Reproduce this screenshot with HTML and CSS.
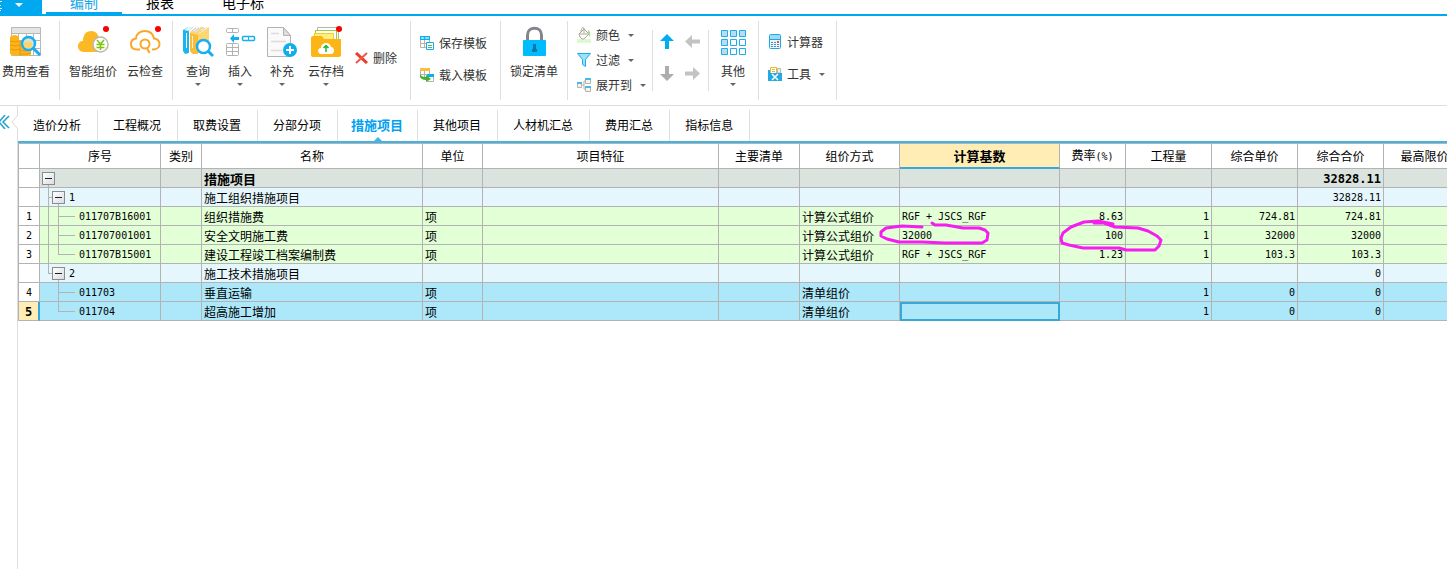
FILE: index.html
```html
<!DOCTYPE html>
<html lang="zh-CN">
<head>
    <meta charset="utf-8">
    <meta name="viewport" content="width=device-width, initial-scale=1.0">
    <title>措施项目</title>
    <link rel="stylesheet" href="styles.css">
</head>
<body>
    <!-- 顶部菜单 -->
    <header class="menu-bar">
        <button class="menu-app" aria-label="菜单">
            <svg width="24" height="12" viewBox="0 0 24 12" fill="none">
                <path d="M0 1.500H2M0 5.500H1M0 8.500H2M0 10.500H1" stroke="#fff" />
                <path d="M15 3H23L19 7Z" fill="#fff" />
            </svg>
        </button>
        <nav class="menu-tabs">
            <a class="active" href="#">编制</a>
            <a href="#">报表</a>
            <a href="#">电子标</a>
        </nav>
    </header>

    <!-- 工具栏 -->
    <div class="ribbon">
        <div class="group group-view">
            <button class="tool">
                <svg width="32" height="32" viewBox="0 0 32 32" fill="none">
                    <path d="M1.500 1.500H30.500V29.500H1.500Z" fill="#fff" stroke="#b8b8b8" />
                    <path d="M2 2H30V7H2Z" fill="#e4e4e4" />
                    <path d="M1 7.500H30M1 14.500H30M1 22.500H30M8.500 7V29M16.500 7V29M23.500 7V29" stroke="#b8b8b8" />
                    <path d="M0 11Q5 7 9 11V15Q15 12 21 16V29Q16 31 12 29Q5 31 0 28Z" fill="#fdb515" />
                    <path d="M0 15Q5 17 9 15M0 19Q5 21 10 19M0 23Q5 25 10 23M10 15V30M10 24Q15 26 21 24M10 28Q15 29 21 27" stroke="#e8951c" />
                    <circle cx="18.500" cy="17.500" r="6.500" fill="#d9e3d2" stroke="#19aef0" stroke-width="2.500" />
                    <path d="M14 17Q18 14 22 17V21Q18 23 14 21Z" fill="#ffd36b" />
                    <path d="M23.500 22.500L30 29" stroke="#19aef0" stroke-width="3" />
                </svg>
                <span>费用查看</span>
            </button>
        </div>
        <i class="sep"></i>

        <div class="group group-cloud">
            <button class="tool">
                <svg width="32" height="32" viewBox="0 0 32 32" fill="none">
                    <path d="M7 26C3 26 1 23 1 20.500C1 17 3 15 6 15C6 9 9 5 14 5C19 5 21 8 22 12L26 15V26Z" fill="#fdb924" />
                    <circle cx="23.500" cy="18.500" r="7.500" fill="#fff" stroke="#bdb8ae" stroke-width="1.500" />
                    <path d="M20 14L23.500 18L27 14M19.500 18.500H27.500M19.500 21.500H27.500M23.500 18V24" stroke="#7ac70c" stroke-width="1.500" />
                    <circle cx="29" cy="3" r="3" fill="#fa0000" />
                </svg>
                <span>智能组价</span>
            </button>
            <button class="tool">
                <svg width="32" height="32" viewBox="0 0 32 32" fill="none">
                    <path d="M11 23.500H8C4 23.500 2 21 2 18C2 15 4 13 7 12.500C7 8 11 5 16 5C21 5 24 8 25 12.500C28 13 30.500 15 30.500 18C30.500 21 28 23.500 24 23.500H23" stroke="#fba628" stroke-width="2" />
                    <circle cx="16" cy="18" r="4.500" stroke="#fba628" stroke-width="2" />
                    <path d="M18 22L20.500 27" stroke="#fba628" stroke-width="2" />
                    <circle cx="29" cy="3" r="3" fill="#fa0000" />
                </svg>
                <span>云检查</span>
            </button>
        </div>
        <i class="sep"></i>

        <div class="group group-edit">
            <button class="tool">
                <svg width="32" height="32" viewBox="0 0 32 32" fill="none">
                    <path d="M1 4L6 1H11L7 5V27L3 28L1 25Z" fill="#19b5ee" />
                    <path d="M2 4L6 1H11L7 5Z" fill="#e9f4f8" />
                    <path d="M4.500 7V22" stroke="#fff" />
                    <path d="M8 6L14 1H27V22L16 27L11 28L8 25Z" fill="#fdd66d" />
                    <path d="M9 5L14 1H19L14 6ZM18 5L22 1H27L17 8Z" fill="#f3f3f3" />
                    <path d="M10 5L14 2M12 6L17 2M18 6L23 2" stroke="#c9c9c9" />
                    <path d="M8 7V25L11 28H16V9Z" fill="#f9bd3c" />
                    <path d="M10.500 10V22" stroke="#fff1c9" />
                    <circle cx="21.500" cy="20.500" r="6.500" fill="#fff" stroke="#19aef0" stroke-width="2.500" />
                    <path d="M26 25L31 30" stroke="#19aef0" stroke-width="3" />
                </svg>
                <span>查询</span>
                <i class="caret"></i>
            </button>
            <button class="tool">
                <svg width="32" height="32" viewBox="0 0 32 32" fill="none">
                    <rect x="2.500" y="2.500" width="12" height="4" rx="1" stroke="#b3b3b3" />
                    <path d="M8.500 2V7" stroke="#b3b3b3" />
                    <path d="M6 12.500L10 8V11H15V14H10V17Z" fill="#19aef0" />
                    <rect x="18.500" y="10.500" width="12" height="4" rx="1" stroke="#19aef0" stroke-width="1.500" />
                    <path d="M24.500 10V15" stroke="#19aef0" />
                    <rect x="2.500" y="17.500" width="12" height="12" rx="1" stroke="#b3b3b3" />
                    <path d="M2 21.500H15M2 25.500H15M8.500 17V30" stroke="#b3b3b3" />
                </svg>
                <span>插入</span>
                <i class="caret"></i>
            </button>
            <button class="tool">
                <svg width="32" height="32" viewBox="0 0 32 32" fill="none">
                    <path d="M1.500 1.500H17.500L24.500 9.500V30.500H1.500Z" fill="#fafafa" stroke="#b3b3b3" />
                    <path d="M17.500 1.500V9.500H24.500Z" fill="#dedede" stroke="#b3b3b3" />
                    <path d="M5 7.500H13M5 15.500H20M5 24.500H16" stroke="#dcdcdc" stroke-width="1.500" />
                    <circle cx="24" cy="24" r="7" fill="#10aeef" />
                    <path d="M24 20V28M20 24H28" stroke="#fff" stroke-width="2" />
                </svg>
                <span>补充</span>
                <i class="caret"></i>
            </button>
            <button class="tool tool-wide">
                <svg width="32" height="32" viewBox="0 0 32 32" fill="none">
                    <path d="M7.500 1.500H28.500V20H7.500Z" fill="#fff" stroke="#b3b3a6" />
                    <path d="M5.500 4.500H26.500V20H5.500Z" fill="#fff" stroke="#9ccb3b" />
                    <path d="M4.500 7.500H23.500V20H4.500Z" fill="#ffef83" stroke="#f2cf1c" />
                    <path d="M1 12Q1 10 3 10H12L14 13H31V29Q31 31 29 31H3Q1 31 1 29Z" fill="#fdb515" />
                    <path d="M11 28C7 28 7 22 11 22C11 16 20 15 21 21C25 21 25 28 21 28Z" fill="#fff" />
                    <path d="M16 26V20M13.500 22L16 19.500L18.500 22" stroke="#28b428" stroke-width="1.500" />
                    <circle cx="29" cy="3" r="3" fill="#fa0000" />
                </svg>
                <span>云存档</span>
                <i class="caret"></i>
            </button>
            <button class="row-tool delete">
                <svg width="13" height="12" viewBox="0 0 13 12" fill="none">
                    <path d="M1 1L12 11" stroke="#ee3a2c" stroke-width="3" />
                    <path d="M12 1L1 11" stroke="#f2564a" stroke-width="2" />
                </svg>
                <span>删除</span>
            </button>
        </div>
        <i class="sep"></i>

        <div class="group group-template">
            <button class="row-tool">
                <svg width="14" height="14" viewBox="0 0 14 14" fill="none">
                    <path d="M0.500 0.500H9.500V11.500H0.500Z" fill="#fff" stroke="#b9b2a8" />
                    <path d="M0 0H10V4H0Z" fill="#10aeef" />
                    <path d="M1 1H4V3H1ZM5 1H9V3H5Z" fill="#8fdcf8" />
                    <path d="M4.500 4V12M0 7.500H10" stroke="#b9b2a8" />
                    <path d="M6.500 6.500H13.500V13.500H6.500Z" fill="#fff" stroke="#10aeef" />
                    <path d="M8 9.500H12M8 11.500H12" stroke="#49b86f" />
                </svg>
                <span>保存模板</span>
            </button>
            <button class="row-tool">
                <svg width="14" height="14" viewBox="0 0 14 14" fill="none">
                    <path d="M0.500 0.500H9.500V9.500H0.500Z" fill="#fff" stroke="#b9b2a8" />
                    <path d="M0 0H10V3H0Z" fill="#fdbd3d" />
                    <path d="M4.500 3V10M0 6.500H10" stroke="#b9b2a8" />
                    <path d="M7.500 6.500H13.500V13.500H7.500Z" fill="#fff" stroke="#b9b2a8" />
                    <path d="M7 6H14V9H7Z" fill="#10aeef" />
                    <path d="M0 5C0 8 3 9 6 9V7L11 11L6 14V12C1 12 -1 9 0 5Z" fill="#42b12d" />
                </svg>
                <span>载入模板</span>
            </button>
        </div>
        <i class="sep"></i>

        <div class="group group-lock">
            <button class="tool">
                <svg width="32" height="32" viewBox="0 0 32 32" fill="none">
                    <path d="M9.500 14V9C9.500 0 23.500 0 23.500 9V14" stroke="#84848a" stroke-width="3" />
                    <rect x="5" y="14" width="23" height="16" rx="1" fill="#00bcff" />
                    <path d="M15 18H18V23H19V26H14V23H15Z" fill="#0878a8" />
                </svg>
                <span>锁定清单</span>
            </button>
        </div>
        <i class="sep"></i>

        <div class="group group-show">
            <button class="row-tool">
                <svg width="14" height="16" viewBox="0 0 14 16" fill="none">
                    <path d="M0 12H14V16H0Z" fill="#dcf9cf" />
                    <path d="M2 7L7 2L12 7L7 12Q5 13 3 10Z" fill="#fff" stroke="#a7a79d" />
                    <path d="M4 5Q4 0 7 1V6M3 7H11" stroke="#a7a79d" />
                    <path d="M11 3Q14 4 13 10L11 7Z" fill="#a2de8b" />
                </svg>
                <span>颜色</span>
                <i class="caret"></i>
            </button>
            <button class="row-tool">
                <svg width="14" height="16" viewBox="0 0 14 16" fill="none">
                    <path d="M0.500 1.500H13.500L8.500 7.500V14.500L5.500 12.500V7.500Z" fill="#9be0f8" stroke="#19aef0" />
                </svg>
                <span>过滤</span>
                <i class="caret"></i>
            </button>
            <button class="row-tool">
                <svg width="14" height="16" viewBox="0 0 14 16" fill="none">
                    <path d="M4 8H7M7 4V12H9M7 4H9" stroke="#b9b2a8" />
                    <path d="M0.500 5.500H4.500V10.500H0.500ZM8.500 1.500H13.500V6.500H8.500ZM8.500 9.500H13.500V14.500H8.500Z" fill="#f7f4ef" stroke="#b9b2a8" />
                    <path d="M0 5H5V7H0ZM8 1H14V3H8ZM8 9H14V11H8Z" fill="#44b9ea" />
                </svg>
                <span>展开到</span>
                <i class="caret"></i>
            </button>
        </div>
        <i class="sep sep-short"></i>

        <div class="group group-move">
            <button aria-label="上移">
                <svg width="15" height="15" viewBox="0 0 15 15"><path d="M7 0L14 7H9V15H5V7H0Z" fill="#00aeef" /></svg>
            </button>
            <button aria-label="左移">
                <svg width="15" height="15" viewBox="0 0 15 15"><path d="M0 7.500L7 1V5.500H15V9.500H7V14Z" fill="#c3c3c3" /></svg>
            </button>
            <button aria-label="下移">
                <svg width="15" height="15" viewBox="0 0 15 15"><path d="M5 0H9V8H14L7 15L0 8H5Z" fill="#adadad" /></svg>
            </button>
            <button aria-label="右移">
                <svg width="15" height="15" viewBox="0 0 15 15"><path d="M15 7.500L8 1V5.500H0V9.500H8V14Z" fill="#c3c3c3" /></svg>
            </button>
        </div>
        <i class="sep sep-short"></i>

        <div class="group group-other">
            <button class="tool">
                <svg width="32" height="32" viewBox="0 0 32 32" fill="none" stroke="#19aef0">
                    <path d="M4.500 4.500H10.500V10.500H4.500ZM13.500 4.500H19.500V10.500H13.500ZM22.500 4.500H28.500V10.500H22.500ZM4.500 13.500H10.500V19.500H4.500ZM4.500 22.500H10.500V28.500H4.500Z" fill="#b9dcf0" />
                    <path d="M13.500 13.500H19.500V19.500H13.500ZM22.500 13.500H28.500V19.500H22.500ZM13.500 22.500H19.500V28.500H13.500ZM22.500 22.500H28.500V28.500H22.500Z" fill="#fff" />
                </svg>
                <span>其他</span>
                <i class="caret"></i>
            </button>
        </div>
        <i class="sep"></i>

        <div class="group group-util">
            <button class="row-tool">
                <svg width="14" height="16" viewBox="0 0 14 16" fill="none">
                    <rect x="1.500" y="0.500" width="11" height="14" rx="1" fill="#eaf6fc" stroke="#22a7dd" />
                    <path d="M2 1H12V5H2Z" fill="#9adcf5" />
                    <path d="M1 5.500H13" stroke="#22a7dd" />
                    <path d="M3 8.500H5M6 8.500H8M3 10.500H5M6 10.500H8M3 12.500H5M6 12.500H8M9 10.500H11M9 12.500H11" stroke="#4b8fc7" />
                    <path d="M9 7H11V9H9Z" fill="#f0503c" />
                </svg>
                <span>计算器</span>
            </button>
            <button class="row-tool">
                <svg width="14" height="16" viewBox="0 0 14 16" fill="none">
                    <path d="M2.500 1.500H8.500V9H2.500Z" fill="#fff" stroke="#f0b429" />
                    <path d="M4 3.500H7M4 5.500H7" stroke="#f0b429" />
                    <path d="M9.500 2.500H12.500V7H9.500Z" fill="#eee" stroke="#b9b9b9" />
                    <path d="M0 4H2V7H14V15H0Z" fill="#22aae6" />
                    <path d="M4 8L10 14M10 8L4 14" stroke="#fff" stroke-width="1.500" />
                </svg>
                <span>工具</span>
                <i class="caret"></i>
            </button>
        </div>
        <i class="sep"></i>
    </div>

    <div class="main">
        <!-- 左侧折叠栏 -->
        <aside class="side">
            <button aria-label="展开">
                <svg width="18" height="14" viewBox="0 0 18 14" fill="none">
                    <path d="M5 0L-1 7L5 14M9 1L3 7L9 13" stroke="#1ba0d0" stroke-width="1.500" />
                    <path d="M18 0L12 7L18 14" fill="#fff" stroke="#d9d9d9" />
                </svg>
            </button>
        </aside>

        <div class="content">
            <!-- 页签 -->
            <nav class="tabs">
                <a href="#">造价分析</a>
                <a href="#">工程概况</a>
                <a href="#">取费设置</a>
                <a href="#">分部分项</a>
                <a class="active" href="#">措施项目</a>
                <a href="#">其他项目</a>
                <a href="#">人材机汇总</a>
                <a href="#">费用汇总</a>
                <a href="#">指标信息</a>
            </nav>

            <!-- 措施项目表 -->
            <div class="grid-wrap">
                <table class="grid">
                    <colgroup>
                        <col class="c-row"><col class="c-code"><col class="c-type"><col class="c-name"><col class="c-unit">
                        <col class="c-feature"><col class="c-main"><col class="c-mode"><col class="c-base"><col class="c-rate">
                        <col class="c-qty"><col class="c-qty"><col class="c-qty"><col class="c-limit">
                    </colgroup>
                    <thead>
                        <tr>
                            <th></th>
                            <th>序号</th>
                            <th>类别</th>
                            <th>名称</th>
                            <th>单位</th>
                            <th>项目特征</th>
                            <th>主要清单</th>
                            <th>组价方式</th>
                            <th class="current">计算基数</th>
                            <th>费率<span class="mono">(%)</span></th>
                            <th>工程量</th>
                            <th>综合单价</th>
                            <th>综合合价</th>
                            <th>最高限价</th>
                        </tr>
                    </thead>
                    <tbody>
                        <tr class="total">
                            <td class="row-no"></td>
                            <td class="tree root"><button class="toggle" aria-label="折叠"></button></td>
                            <td></td><td>措施项目</td><td></td><td></td><td></td><td></td><td></td><td></td><td></td><td></td>
                            <td class="num">32828.11</td><td></td>
                        </tr>
                        <tr class="section">
                            <td class="row-no"></td>
                            <td class="tree branch"><button class="toggle" aria-label="折叠"></button>1</td>
                            <td></td><td>施工组织措施项目</td><td></td><td></td><td></td><td></td><td></td><td></td><td></td><td></td>
                            <td class="num">32828.11</td><td></td>
                        </tr>
                        <tr class="item">
                            <td class="row-no">1</td>
                            <td class="tree leaf">011707B16001</td>
                            <td></td><td>组织措施费</td><td>项</td><td></td><td></td><td>计算公式组价</td>
                            <td class="mono">RGF + JSCS_RGF</td>
                            <td class="num">8.63</td><td class="num">1</td><td class="num">724.81</td><td class="num">724.81</td><td></td>
                        </tr>
                        <tr class="item">
                            <td class="row-no">2</td>
                            <td class="tree leaf">011707001001</td>
                            <td></td><td>安全文明施工费</td><td>项</td><td></td><td></td><td>计算公式组价</td>
                            <td class="mono">32000</td>
                            <td class="num">100</td><td class="num">1</td><td class="num">32000</td><td class="num">32000</td><td></td>
                        </tr>
                        <tr class="item">
                            <td class="row-no">3</td>
                            <td class="tree leaf leaf-end">011707B15001</td>
                            <td></td><td>建设工程竣工档案编制费</td><td>项</td><td></td><td></td><td>计算公式组价</td>
                            <td class="mono">RGF + JSCS_RGF</td>
                            <td class="num">1.23</td><td class="num">1</td><td class="num">103.3</td><td class="num">103.3</td><td></td>
                        </tr>
                        <tr class="section">
                            <td class="row-no"></td>
                            <td class="tree branch branch-end"><button class="toggle" aria-label="折叠"></button>2</td>
                            <td></td><td>施工技术措施项目</td><td></td><td></td><td></td><td></td><td></td><td></td><td></td><td></td>
                            <td class="num">0</td><td></td>
                        </tr>
                        <tr class="item-blue">
                            <td class="row-no">4</td>
                            <td class="tree sub">011703</td>
                            <td></td><td>垂直运输</td><td>项</td><td></td><td></td><td>清单组价</td>
                            <td></td><td></td><td class="num">1</td><td class="num">0</td><td class="num">0</td><td></td>
                        </tr>
                        <tr class="item-blue">
                            <td class="row-no current">5</td>
                            <td class="tree sub sub-end">011704</td>
                            <td></td><td>超高施工增加</td><td>项</td><td></td><td></td><td>清单组价</td>
                            <td class="selected"></td><td></td><td class="num">1</td><td class="num">0</td><td class="num">0</td><td></td>
                        </tr>
                    </tbody>
                </table>

                <!-- 手绘标记 -->
                <svg class="marks" width="300" height="40" viewBox="874 216 300 40" fill="none" stroke="#f51df0" stroke-width="3" stroke-linecap="round" stroke-linejoin="round">
                    <path d="M922 227L902 226L886 228L881 232L881 236L887 239L899 242L922 242L945 243L982 243L987 240L988 233L985 230L979 228L963 228L946 225L935 225L932 223" />
                    <path d="M1113 224L1098 221L1084 222L1071 227L1063 233L1061 238L1062 243L1069 245L1083 248L1119 248L1126 250L1155 250L1159 246L1161 240L1157 236L1148 231L1138 228L1115 227L1104 223L1094 223" />
                </svg>
            </div>
        </div>
    </div>
</body>
</html>
```
FILE: styles.css
```css
/* 全局样式 */
* {
    box-sizing: border-box;
}

body {
    font-family: "Noto Sans CJK SC", "Noto Sans", sans-serif;
    font-size: 12px;
    line-height: 16px;
    color: #000;
    margin: 0;
    background-color: #fff;
    min-height: 100vh;
    display: flex;
    flex-direction: column;
    overflow: hidden;
}

a {
    color: inherit;
    text-decoration: none;
}

button {
    background: none;
    border: none;
    padding: 0;
    font: inherit;
    color: inherit;
    cursor: pointer;
}

svg {
    display: block;
    flex-shrink: 0;
}

/* 顶部菜单 */
.menu-bar {
    display: flex;
    gap: 4px;
    border-bottom: 2px solid #00a8f0;
}

.menu-app {
    width: 42px;
    background-color: #00a8f0;
    padding-bottom: 2px;
}

.menu-tabs {
    display: flex;
    font-size: 14px;
    line-height: 4px;
}

    .menu-tabs a {
        padding: 0 24px 8px;
        border-bottom: 2px solid transparent;
    }

    .menu-tabs .active {
        color: #14a5ea;
        border-color: #00a8f0;
    }

/* 工具栏 */
.ribbon {
    display: flex;
    padding: 5px 0;
    border-bottom: 1px solid #dedede;
    color: #333;
    white-space: nowrap;
}

.group {
    display: flex;
    align-items: flex-start;
    flex-shrink: 0;
    height: 79px;
}

.sep {
    width: 1px;
    flex-shrink: 0;
    background-color: #dedede;
}

.sep-short {
    margin: 9px 0;
}

.tool {
    display: flex;
    flex-direction: column;
    align-items: center;
    min-width: 42px;
    padding-top: 5px;
}

    .tool span {
        margin: 5px 0 4px;
    }

.tool-wide {
    min-width: 46px;
}

.row-tool {
    display: flex;
    align-items: center;
    gap: 5px;
    height: 16px;
}

    .row-tool .caret {
        margin-left: 3px;
    }

.caret {
    border: 3px solid transparent;
    border-top-color: #666472;
    border-bottom: none;
}

.group-view {
    padding: 0 9px 0 2px;
}

.group-cloud {
    gap: 7px;
    padding: 0 6px 0 9px;
}

.group-edit {
    padding: 0 13px 0 4px;
}

.delete {
    margin: 29px 0 0 6px;
}

.group-template {
    flex-direction: column;
    gap: 16px;
    padding: 14px 13px 0 9px;
}

.group-lock {
    padding: 0 9px;
}

.group-show {
    flex-direction: column;
    gap: 9px;
    padding: 6px 6px 0 9px;
}

.group-move {
    display: grid;
    grid-template-columns: 15px 15px;
    grid-auto-rows: 15px;
    gap: 17px 10px;
    padding: 13px 8px 0 7px;
}

.group-other {
    padding: 0 4px 0 3px;
}

.group-util {
    flex-direction: column;
    gap: 16px;
    padding: 13px 11px 0 9px;
}

/* 主区域 */
.main {
    display: flex;
    flex: 1;
}

.side {
    width: 18px;
    flex-shrink: 0;
    border-right: 1px solid #dedede;
    padding-top: 9px;
}

.content {
    flex: 1;
    min-width: 0;
}

/* 页签 */
.tabs {
    display: flex;
    padding-top: 4px;
    border-bottom: 2px solid #41b4e2;
    line-height: 29px;
}

    .tabs a {
        padding: 0 16px 2px 15px;
        border-right: 1px solid #dedede;
    }

    .tabs .active {
        position: relative;
        padding: 0 14px 2px 13px;
        font-size: 13px;
        font-weight: bold;
        color: #00a2f0;
    }

        /* 当前页签下方的小三角 */
        .tabs .active::after {
            content: "";
            position: absolute;
            left: 50%;
            bottom: 0;
            margin-left: -4px;
            border: 4px solid transparent;
            border-top: none;
            border-bottom-color: #41b4e2;
        }

/* 表格 */
.grid-wrap {
    position: relative;
    overflow: hidden;
    border-top: 1px solid #b3b3b3;
}

.grid {
    table-layout: fixed;
    width: 100%;
    min-width: 1448px;
    border-spacing: 0;
    white-space: nowrap;
}

    .grid th,
    .grid td {
        padding: 0 2px;
        border-right: 1px solid #b3b3b3;
        border-bottom: 1px solid #b3b3b3;
        overflow: hidden;
    }

    .grid th {
        height: 25px;
        font-weight: normal;
    }

    .grid td {
        height: 19px;
        padding-top: 2px;
        line-height: 16px;
    }

    .grid th:first-child,
    .grid td:first-child {
        border-left: 1px solid #b3b3b3;
    }

    .grid th.current {
        background-color: #ffedb5;
        border-bottom: 2px solid #38a9d6;
        font-size: 13px;
        font-weight: bold;
    }

.c-row { width: 22px; }
.c-code { width: 121px; }
.c-type { width: 41px; }
.c-name { width: 221px; }
.c-unit { width: 60px; }
.c-feature { width: 236px; }
.c-main { width: 81px; }
.c-mode { width: 100px; }
.c-base { width: 160px; }
.c-rate { width: 66px; }
.c-qty { width: 86px; }
.c-limit { width: 82px; }

.mono,
.grid .num,
.grid .tree,
.grid .row-no {
    font-family: "DejaVu Sans Mono", "Liberation Mono", monospace;
    font-size: 10px;
}

.grid .num {
    text-align: right;
}

.grid .row-no {
    background-color: #fff;
    text-align: center;
}

    .grid .row-no.current {
        background-color: #ffedb5;
        border-right: 2px solid #38a9d6;
        font-size: 12px;
        font-weight: bold;
    }

.total {
    background-color: #dae3dd;
}

    .total td {
        font-size: 13px;
        font-weight: bold;
    }

    .grid .total .num {
        font-size: 12px;
    }

.section {
    background-color: #e5f7fc;
}

.item {
    background-color: #e3ffd6;
}

.item-blue {
    background-color: #ade8fa;
}

.grid .selected {
    outline: 2px solid #38a9d6;
    outline-offset: -2px;
}

/* 树形连线 */
.tree {
    --line: linear-gradient(#b3b3b3, #b3b3b3);
    background-repeat: no-repeat;
}

.root {
    background-image: var(--line);
    background-position: 8px 9px;
    background-size: 1px 100%;
}

.branch {
    background-image: var(--line), var(--line), var(--line);
    background-position: 8px 0, 8px 9px, 18px 9px;
    background-size: 1px 100%, 6px 1px, 1px 100%;
}

.branch-end {
    background-size: 1px 9px, 6px 1px, 1px 100%;
}

.leaf {
    background-image: var(--line), var(--line), var(--line);
    background-position: 8px 0, 18px 0, 18px 9px;
    background-size: 1px 100%, 1px 100%, 17px 1px;
}

.leaf-end {
    background-size: 1px 100%, 1px 9px, 17px 1px;
}

.sub {
    background-image: var(--line), var(--line);
    background-position: 18px 0, 18px 9px;
    background-size: 1px 100%, 17px 1px;
}

.sub-end {
    background-size: 1px 9px, 17px 1px;
}

.grid .branch {
    padding-left: 12px;
}

.grid .leaf,
.grid .sub {
    padding-left: 39px;
}

.toggle {
    width: 13px;
    height: 13px;
    margin: 0 4px 2px 0;
    border: 1px solid #8c8c8c;
    background: linear-gradient(#222, #222) center / 7px 1px no-repeat, linear-gradient(135deg, #fff, #d9dde3);
    vertical-align: middle;
}

/* 手绘标记 */
.marks {
    position: absolute;
    left: 856px;
    top: 72px;
    pointer-events: none;
}
```
